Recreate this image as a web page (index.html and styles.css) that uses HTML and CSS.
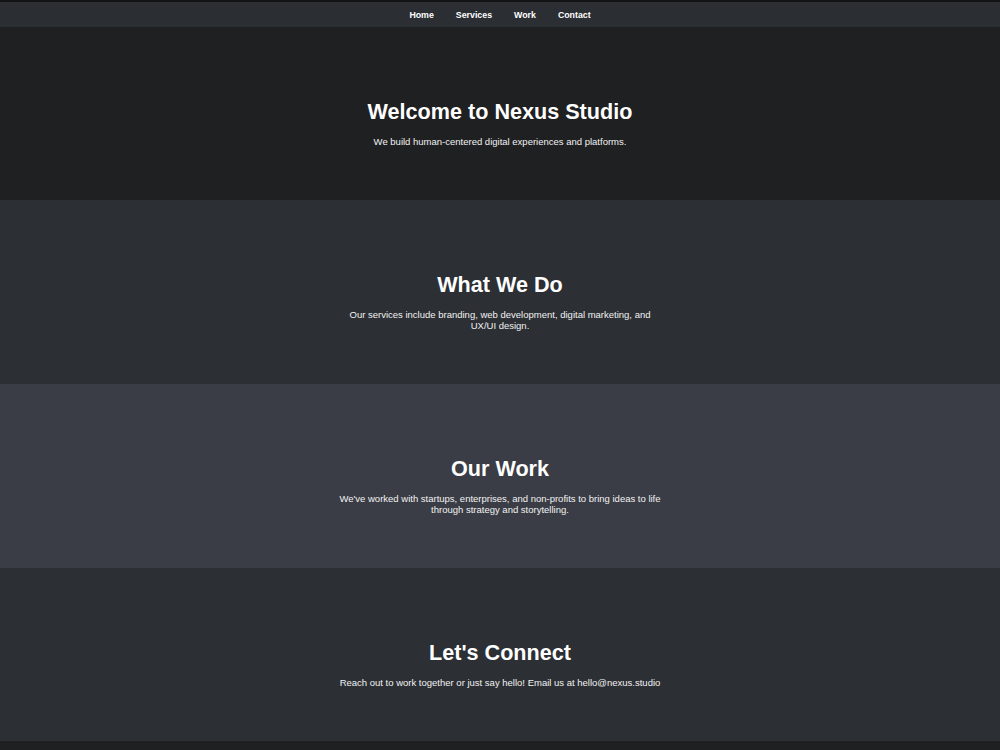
FILE: index.html
```html
<!DOCTYPE html>
<html lang="en">
<head>
    <meta charset="UTF-8">
    <meta name="viewport" content="width=device-width, initial-scale=1.0">
    <title>Nexus Studio</title>
    <link rel="stylesheet" href="styles.css">
</head>
<body>

<header class="topbar">
    <nav class="nav">
        <a href="#home">Home</a>
        <a href="#services">Services</a>
        <a href="#work">Work</a>
        <a href="#contact">Contact</a>
    </nav>
</header>

<section id="home" class="section hero">
    <h1>Welcome to Nexus Studio</h1>
    <p>We build human-centered digital experiences and platforms.</p>
</section>

<section id="services" class="section services">
    <h2>What We Do</h2>
    <p>Our services include branding, web development, digital marketing, and UX/UI design.</p>
</section>

<section id="work" class="section work">
    <h2>Our Work</h2>
    <p>We've worked with startups, enterprises, and non-profits to bring ideas to life through strategy and storytelling.</p>
</section>

<section id="contact" class="section contact">
    <h2>Let's Connect</h2>
    <p>Reach out to work together or just say hello! Email us at hello@nexus.studio</p>
</section>

<footer class="footer"></footer>

</body>
</html>
```
FILE: styles.css
```css
/* Tata letak dasar halaman */
body {
    margin: 0;
    font-family: "Liberation Sans", Arial, sans-serif;
    background-color: #1f2022;
    color: #fff;
}
.topbar {
    border-top: 2px solid #131416;
    background-color: #2b2e33;
}
.nav {
    display: flex;
    justify-content: center;
    align-items: center;
    gap: 22px;
    height: 25px;
}
.nav a {
    color: #fff;
    text-decoration: none;
    font-weight: bold;
    font-size: 8.8px;
}
.section {
    padding: 72px 20px 53px;
    text-align: center;
}
.section h1,
.section h2 {
    margin: 0 0 12px;
    font-size: 21.6px;
    line-height: 25px;
    font-weight: bold;
}
.section p {
    max-width: 326px;
    margin: 0 auto;
    font-size: 9.5px;
    line-height: 11px;
    color: #f2f2f2;
}
.hero {
    background-color: #1f2022;
}
.services {
    background-color: #2c2f34;
}
.work {
    background-color: #3a3d45;
}
.contact {
    background-color: #2c2f34;
}
.footer {
    height: 40px;
    background-color: #1f2022;
}
```
